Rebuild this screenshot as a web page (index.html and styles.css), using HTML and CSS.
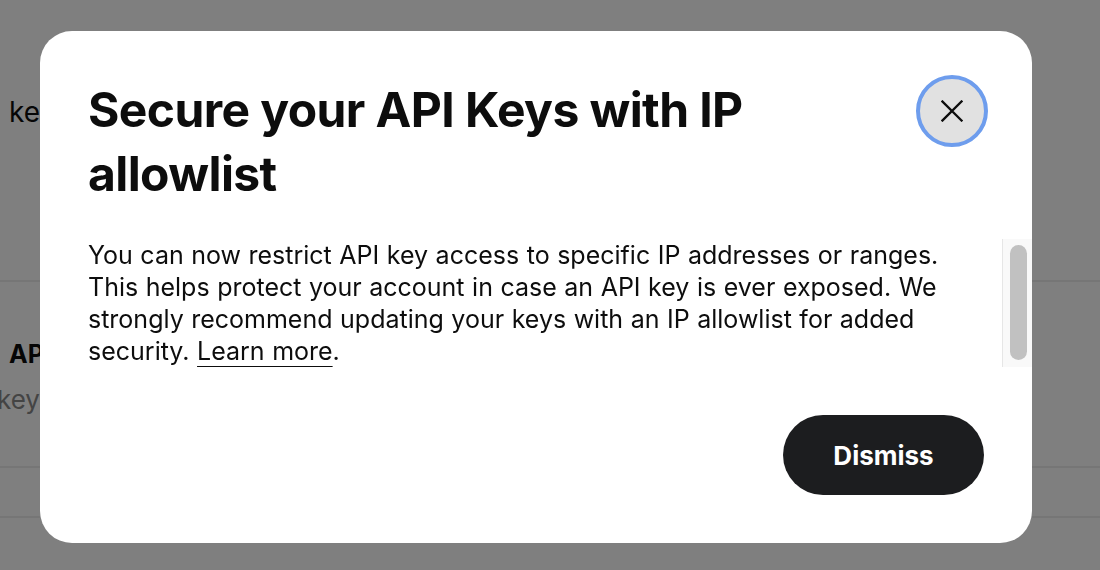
FILE: index.html
```html
<!DOCTYPE html>
<html lang="en">
<head>
<meta charset="utf-8">
<title>Secure your API Keys with IP allowlist</title>
<link rel="stylesheet" href="styles.css">
</head>
<body>
<div class="page">
  <p class="intro">keys</p>
  <hr class="divider first">
  <div class="key-row">
    <h2 class="key-name">API</h2>
    <p class="key-desc">key</p>
  </div>
  <hr class="divider second">
  <hr class="divider third">
</div>

<div class="overlay">
  <div class="modal" role="dialog" aria-labelledby="modal-title">
    <div class="modal-header">
      <h1 class="modal-title" id="modal-title">Secure your API Keys with IP allowlist</h1>
      <button class="close-btn" aria-label="Close">
        <svg width="22" height="22" viewBox="0 0 22 22" aria-hidden="true">
          <path d="M1.5 1.5 L20.5 20.5 M20.5 1.5 L1.5 20.5" stroke="#0d0d0d" stroke-width="2.3" stroke-linecap="square" fill="none"/>
        </svg>
      </button>
    </div>
    <div class="modal-body">
      <div class="modal-scroll">
        <p class="modal-text">You can now restrict API key access to specific IP addresses or ranges. This helps protect your account in case an API key is ever exposed. We strongly recommend updating your keys with an IP allowlist for added security. <a class="learn" href="#">Learn more</a>.</p>
      </div>
      <div class="scrollbar" aria-hidden="true">
        <div class="scroll-thumb"></div>
      </div>
    </div>
    <div class="modal-footer">
      <button class="dismiss-btn">Dismiss</button>
    </div>
  </div>
</div>
</body>
</html>
```

FILE: styles.css
```css
* { box-sizing: border-box; }

html, body {
  margin: 0;
  padding: 0;
  background: #ffffff;
  font-family: Inter, "Noto Sans", "Liberation Sans", sans-serif;
  color: #0d0d0d;
  overflow: hidden;
}

.page {
  width: 1100px;
  height: 570px;
  padding-left: 9px;
}

.intro {
  margin: 0;
  padding-top: 96px;
  font-size: 28px;
  line-height: 32px;
  height: 129px;
  width: max-content;
}

.divider {
  border: none;
  height: 2px;
  background: #ececec;
  margin: 0 0 0 -9px;
}

.divider.first { margin-top: 151px; }

.key-row {
  padding-top: 56px;
  height: 184px;
}

.key-name {
  margin: 0;
  font-size: 25px;
  font-weight: 700;
  line-height: 32px;
  width: max-content;
}

.key-desc {
  margin: 14px 0 0 -12px;
  font-size: 26px;
  line-height: 32px;
  color: #888888;
  width: max-content;
}

.divider.third { margin-top: 48px; }

.overlay {
  position: fixed;
  inset: 0;
  background: rgba(0, 0, 0, 0.5);
  display: flex;
  align-items: flex-start;
  padding: 31px 0 0 40px;
}

.modal {
  width: 992px;
  height: 512px;
  background: #ffffff;
  border-radius: 32px;
  padding-top: 44px;
  display: flex;
  flex-direction: column;
  overflow: hidden;
}

.modal-header {
  display: flex;
  align-items: flex-start;
  justify-content: space-between;
  gap: 24px;
  padding: 0 44px 0 48px;
}

.modal-title {
  margin: 3px 0 0;
  font-size: 48px;
  line-height: 64px;
  font-weight: 700;
  letter-spacing: -0.6px;
  max-width: 780px;
}

.close-btn {
  flex: none;
  width: 72px;
  height: 72px;
  border-radius: 50%;
  border: 4px solid #6e9ded;
  background: #e1e1e1;
  display: flex;
  align-items: center;
  justify-content: center;
  padding: 0;
  cursor: pointer;
}

.modal-body {
  margin-top: 33px;
  height: 128px;
  display: flex;
}

.modal-scroll {
  flex: 1;
  overflow: hidden;
  padding: 0 30px 0 48px;
}

.scrollbar {
  flex: none;
  width: 30px;
  height: 128px;
  background: #f9f9f9;
  border-left: 1px solid #e6e6e6;
  padding: 6px 5px 7px 7px;
}

.scroll-thumb {
  width: 100%;
  height: 100%;
  background: #c1c1c1;
  border-radius: 9px;
}

.modal-text {
  margin: 0;
  font-size: 25px;
  line-height: 32px;
  font-weight: 400;
  word-spacing: 0.5px;
}

.learn {
  color: inherit;
  text-decoration: underline;
  text-decoration-thickness: 1.5px;
  text-underline-offset: 6px;
}

.modal-footer {
  display: flex;
  justify-content: flex-end;
  padding: 48px 48px 0;
}

.dismiss-btn {
  height: 80px;
  width: 201px;
  border: none;
  border-radius: 40px;
  background: #1c1d1f;
  color: #ffffff;
  font-family: inherit;
  font-size: 26px;
  font-weight: 700;
  cursor: pointer;
}
```
